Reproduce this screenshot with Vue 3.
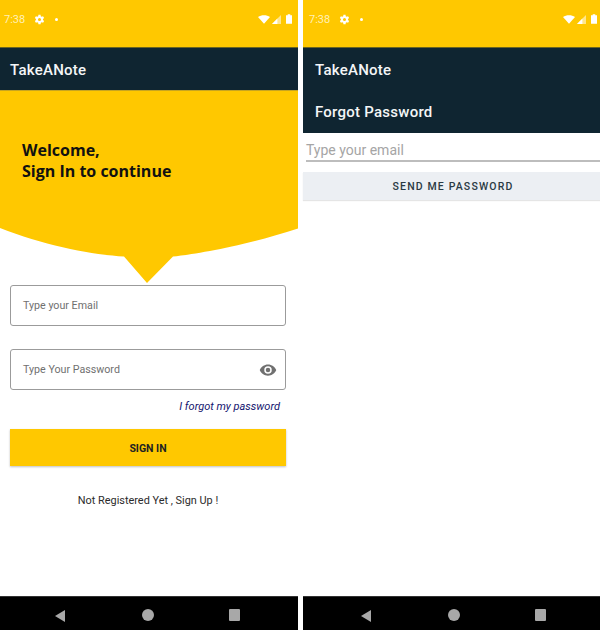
<template>
  <div class="screens">
    <!-- Sign in -->
    <section class="phone left">
      <div class="status">
        <span class="time">7:38</span>
        <svg class="gear" viewBox="1 0 24 24"><path d="M19.4 13a7.500 7.500 0 0 0 0-2l2.100-1.600-2-3.500-2.500 1a7.500 7.500 0 0 0-1.700-1L15 3.300h-4l-.4 2.600a7.500 7.500 0 0 0-1.700 1l-2.500-1-2 3.500L6.500 11a7.500 7.500 0 0 0 0 2l-2.100 1.600 2 3.500 2.500-1a7.500 7.500 0 0 0 1.700 1l.4 2.600h4l.4-2.600a7.500 7.500 0 0 0 1.700-1l2.500 1 2-3.500zM13 14.800a2.800 2.800 0 1 1 0-5.600 2.800 2.800 0 0 1 0 5.600z" /></svg>
        <span class="dot"></span>
        <span class="spacer"></span>
        <svg class="wifi" viewBox="0 0 14 10"><path d="M0 2.200C3.800-.7 10.200-.7 14 2.200L7 10z" /></svg>
        <svg class="signal" viewBox="0 0 10 10"><path d="M10 0v10H0z" opacity=".55" /><path d="M6 4v6H0z" /></svg>
        <svg class="battery" viewBox="0 0 7 11"><path d="M2 0h3v1h2v10H0V1h2z" /></svg>
      </div>
      <header class="appbar"><span class="title">TakeANote</span></header>

      <div class="hero">
        <h1>Welcome,<br />Sign In to continue</h1>
      </div>
      <svg class="hero-tail" viewBox="0 0 298 55">
        <path d="M0 0H298V0.500C245 18 190 27 173 28.500L147 55 124 28.500C95 27 45 18 0 0z" />
      </svg>

      <form class="login" @submit.prevent>
        <div class="field">Type your Email</div>
        <div class="field password">
          <span>Type Your Password</span>
          <svg class="eye" viewBox="0 0 24 24"><path d="M12 4.500C7 4.500 2.700 7.600 1 12c1.700 4.400 6 7.500 11 7.500s9.300-3.100 11-7.500c-1.700-4.400-6-7.500-11-7.500zM12 17a5 5 0 1 1 0-10 5 5 0 0 1 0 10zm0-8a3 3 0 1 0 0 6 3 3 0 0 0 0-6z" /></svg>
        </div>
        <a class="forgot">I forgot my password</a>
        <button type="button" class="signin">SIGN IN</button>
        <p class="register">Not Registered Yet , Sign Up !</p>
      </form>

      <nav class="navbar">
        <svg viewBox="0 0 12 14" class="back"><path d="M11 1v12L1 7z" /></svg>
        <span class="home"></span>
        <span class="recent"></span>
      </nav>
    </section>

    <!-- Forgot password -->
    <section class="phone right">
      <div class="status">
        <span class="time">7:38</span>
        <svg class="gear" viewBox="1 0 24 24"><path d="M19.4 13a7.500 7.500 0 0 0 0-2l2.100-1.600-2-3.500-2.500 1a7.500 7.500 0 0 0-1.700-1L15 3.300h-4l-.4 2.600a7.500 7.500 0 0 0-1.700 1l-2.500-1-2 3.500L6.500 11a7.500 7.500 0 0 0 0 2l-2.100 1.600 2 3.500 2.500-1a7.500 7.500 0 0 0 1.700 1l.4 2.600h4l.4-2.600a7.500 7.500 0 0 0 1.700-1l2.500 1 2-3.500zM13 14.800a2.800 2.800 0 1 1 0-5.600 2.800 2.800 0 0 1 0 5.600z" /></svg>
        <span class="dot"></span>
        <span class="spacer"></span>
        <svg class="wifi" viewBox="0 0 14 10"><path d="M0 2.200C3.800-.7 10.200-.7 14 2.200L7 10z" /></svg>
        <svg class="signal" viewBox="0 0 10 10"><path d="M10 0v10H0z" opacity=".55" /><path d="M6 4v6H0z" /></svg>
        <svg class="battery" viewBox="0 0 7 11"><path d="M2 0h3v1h2v10H0V1h2z" /></svg>
      </div>
      <header class="appbar tall">
        <span class="title">TakeANote</span>
        <span class="title">Forgot Password</span>
      </header>

      <div class="reset">
        <div class="email">Type your email</div>
        <button type="button" class="send">SEND ME PASSWORD</button>
      </div>

      <nav class="navbar">
        <svg viewBox="0 0 12 14" class="back"><path d="M11 1v12L1 7z" /></svg>
        <span class="home"></span>
        <span class="recent"></span>
      </nav>
    </section>
  </div>
</template>

<script setup>
</script>

<style>
html,
body {
  margin: 0;
  background: #fff;
}
</style>

<style scoped>
.screens {
  display: flex;
  justify-content: space-between;
  width: 600px;
  height: 630px;
  font-family: Roboto, sans-serif;
}

.phone {
  display: flex;
  flex-direction: column;
  height: 630px;
  background: #fff;
}

.left {
  width: 298px;
}

.right {
  width: 297px;
}

.status {
  display: flex;
  align-items: center;
  height: 38px;
  padding: 0 6px 9px 4px;
  background: #ffc800;
  color: #fff;
}

.right .status {
  padding: 0 3px 9px 6px;
}

.time {
  width: 29px;
  color: #fff0b8;
  font-size: 11px;
}

.gear {
  width: 13px;
  height: 13px;
  fill: #fff;
}

.dot {
  width: 3px;
  height: 3px;
  margin-left: 9px;
  border-radius: 50%;
  background: #fff;
}

.spacer {
  flex: 1;
}

.wifi {
  width: 12px;
  height: 9px;
  fill: #fff;
}

.signal {
  width: 9px;
  height: 9px;
  margin-left: 2px;
  fill: #fff;
}

.battery {
  width: 6px;
  height: 10px;
  margin-left: 5px;
  fill: #fff;
}

.appbar {
  display: flex;
  flex-direction: column;
  justify-content: center;
  height: 43px;
  padding: 2px 0 0 10px;
  background: #0f2531;
  border-top: 1px solid #6b6420;
  box-sizing: border-box;
}

.appbar.tall {
  height: 86px;
  padding-left: 12px;
  gap: 23px;
}

.title {
  color: #f4f6f7;
  font-size: 15px;
  font-weight: 500;
  line-height: 19px;
  letter-spacing: 0.250px;
}

.hero {
  height: 138px;
  padding: 50px 0 0 22px;
  box-sizing: border-box;
  background: #ffc800;
  box-shadow: inset 0 1px 0 #c7a520;
}

.hero h1 {
  margin: 0;
  color: #111;
  font-family: "Open Sans", sans-serif;
  font-size: 16px;
  font-weight: 700;
  line-height: 21px;
}

.hero-tail {
  display: block;
  width: 298px;
  height: 55px;
  overflow: visible;
  fill: #ffc800;
}

.login {
  display: flex;
  flex-direction: column;
  flex: 1;
  padding: 2px 12px 0 10px;
}

.field {
  display: flex;
  align-items: center;
  justify-content: space-between;
  height: 41px;
  padding: 0 8px 0 12px;
  box-sizing: border-box;
  border: 1px solid #9b9b9b;
  border-radius: 3px;
  color: #707070;
  font-size: 10.700px;
}

.password {
  margin-top: 23px;
}

.eye {
  width: 18px;
  height: 18px;
  fill: #707070;
}

.forgot {
  align-self: flex-end;
  margin: 10px 6px 0 0;
  color: #14146e;
  font-size: 11px;
  font-style: italic;
  line-height: 13px;
}

.signin {
  height: 37px;
  margin-top: 16px;
  padding: 1px 0 0;
  border: none;
  background: #ffc800;
  box-shadow: 0 1px 2px rgba(0, 0, 0, 0.25);
  color: #222;
  font-family: Roboto, sans-serif;
  font-size: 10.500px;
  font-weight: 700;
}

.register {
  margin: 28px 0 0;
  color: #2b2b2b;
  font-size: 10.900px;
  line-height: 14px;
  text-align: center;
}

.reset {
  flex: 1;
}

.email {
  margin: 8px 0 0 3px;
  padding-bottom: 1px;
  border-bottom: 2px solid #bdbdbd;
  color: #a5a5a5;
  font-size: 14px;
  line-height: 18px;
}

.send {
  display: block;
  width: 100%;
  height: 28px;
  margin-top: 10px;
  padding: 0 0 0 3px;
  border: none;
  background: #eceff3;
  box-shadow: 0 1px 1px rgba(0, 0, 0, 0.1);
  color: #2a3a44;
  font-family: Roboto, sans-serif;
  font-size: 10.500px;
  font-weight: 500;
  letter-spacing: 1.150px;
}

.navbar {
  position: relative;
  height: 34px;
  background: #000;
  border-top: 1px solid #333;
  box-sizing: border-box;
}

.back,
.home,
.recent {
  position: absolute;
  top: 12px;
}

.back {
  left: 54px;
  width: 12px;
  height: 14px;
  fill: #a8a8a8;
}

.home {
  left: 142px;
  width: 12px;
  height: 12px;
  border-radius: 50%;
  background: #a8a8a8;
}

.recent {
  left: 229px;
  width: 11px;
  height: 12px;
  border-radius: 1px;
  background: #a8a8a8;
}

.right .back {
  left: 57px;
}

.right .home {
  left: 145px;
}

.right .recent {
  left: 232px;
}
</style>
